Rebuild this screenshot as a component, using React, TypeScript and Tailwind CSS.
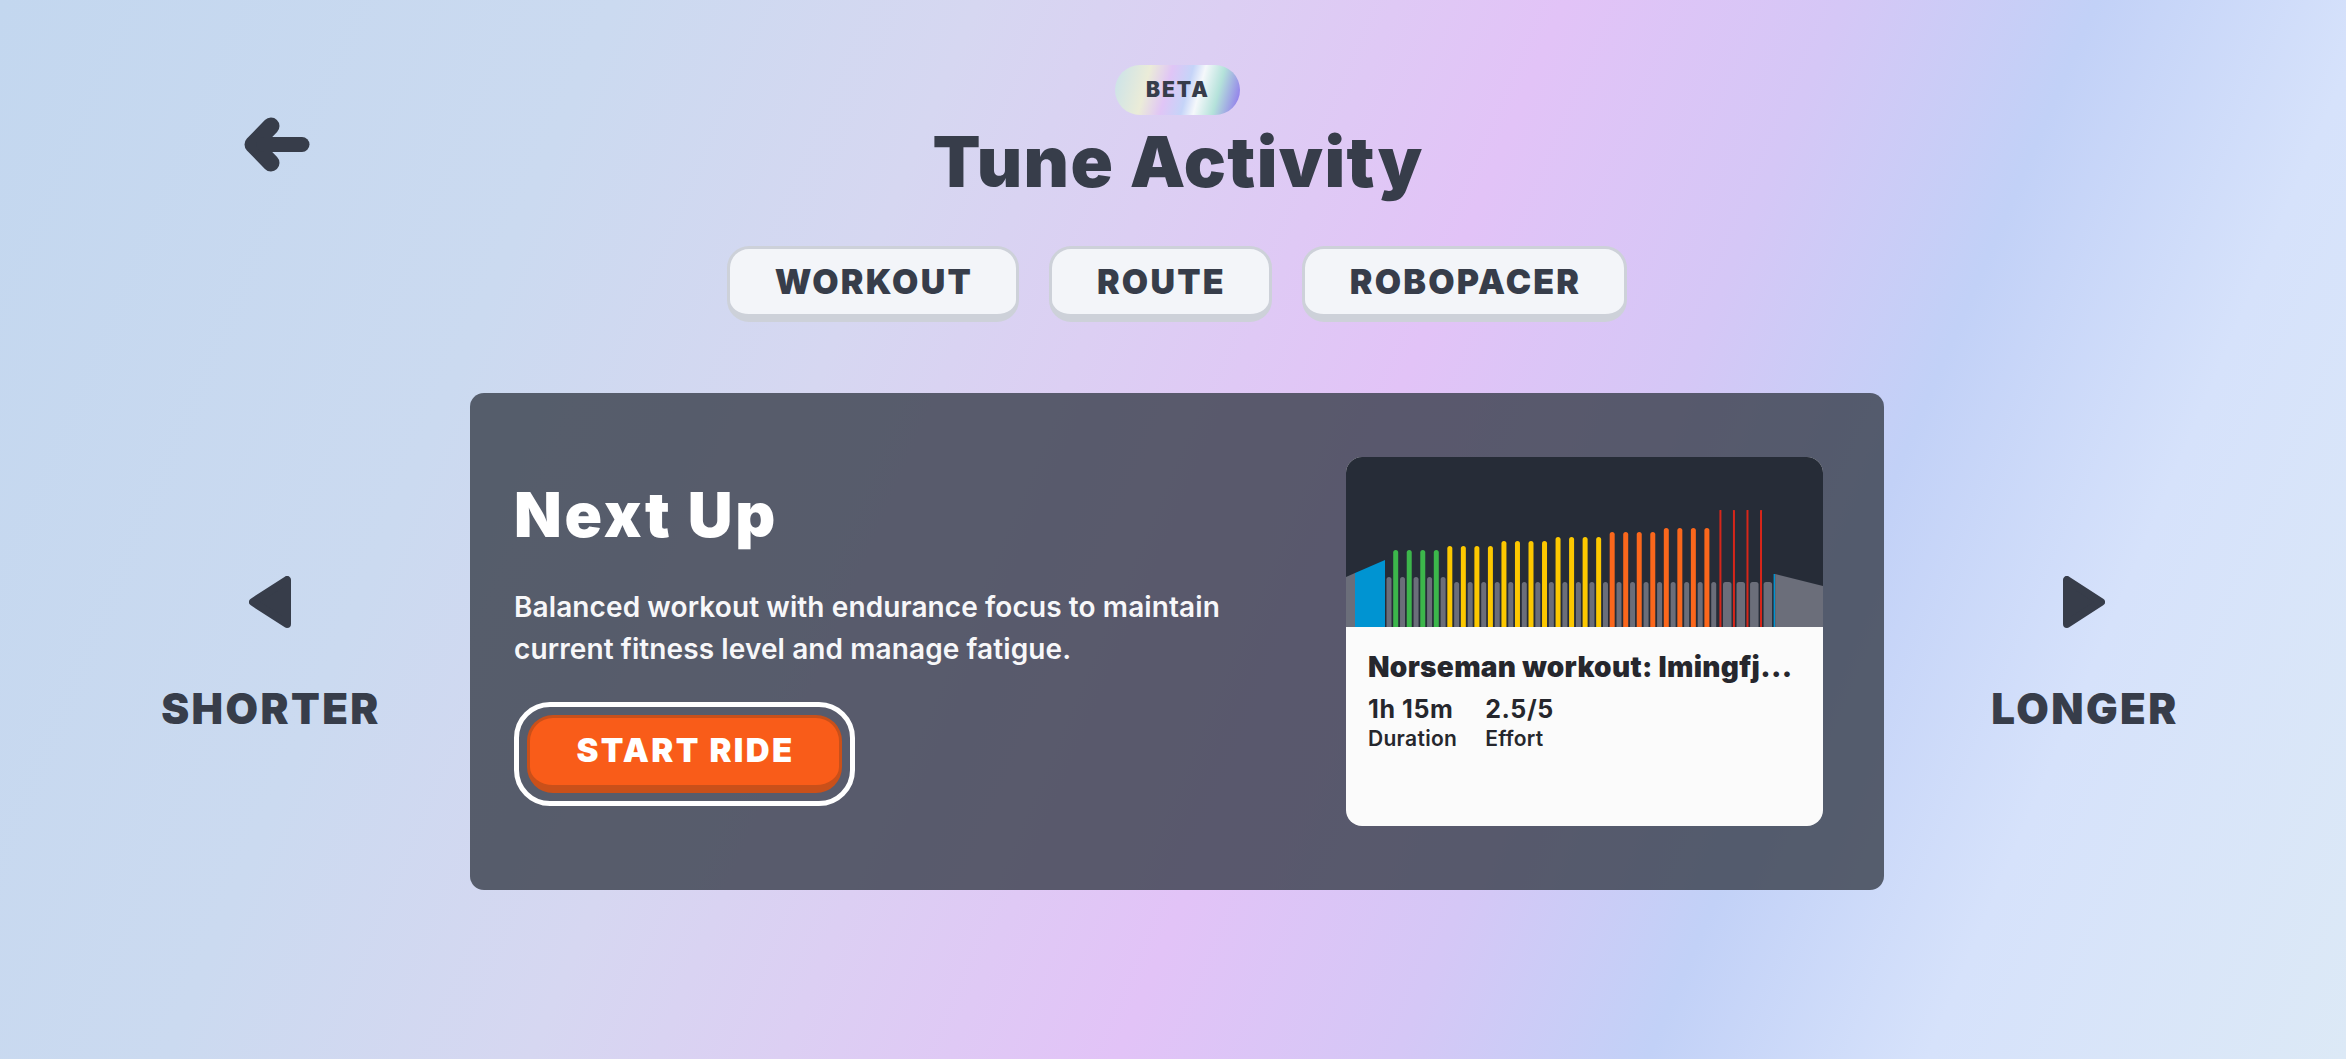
const INK = "#373d4a";

// interval blocks of the workout profile, left to right
const tiers = [
  { color: "#3cb64b", top: 93, n: 4 },
  { color: "#fcc800", top: 89, n: 4 },
  { color: "#fcc800", top: 84, n: 4 },
  { color: "#fcc800", top: 80, n: 4 },
  { color: "#fb671c", top: 75, n: 4 },
  { color: "#fb671c", top: 71, n: 4 },
  { color: "#d6261a", top: 53, n: 4 },
];

const STEP = 13.53;

function BackArrow() {
  return (
    <svg width="66" height="55" viewBox="0 0 66 55" fill="none">
      <path
        d="M27 9 L9 27.5 L27 46"
        stroke={INK}
        strokeWidth="17"
        strokeLinecap="round"
        strokeLinejoin="round"
      />
      <path d="M20 27.5 H58" stroke={INK} strokeWidth="15" strokeLinecap="round" />
    </svg>
  );
}

function Triangle({ dir }: { dir: "left" | "right" }) {
  const pts = dir === "left" ? "4,26 38,4 38,48" : "38,26 4,4 4,48";
  return (
    <svg width="42" height="52" viewBox="0 0 42 52">
      <polygon points={pts} fill={INK} stroke={INK} strokeWidth="8" strokeLinejoin="round" />
    </svg>
  );
}

function Profile() {
  const colored = tiers.flatMap((t) => Array.from({ length: t.n }, () => t));
  const grays = Array.from({ length: 29 }, (_, i) => ({
    cx: 43 + STEP * i,
    top: i <= 4 ? 120 : 125,
    w: i >= 25 ? 8.5 : 5,
  }));

  return (
    <svg viewBox="0 0 477 170" className="block h-[170px] w-[477px]">
      <rect width="477" height="170" fill="#262c37" />
      <polygon points="0,120 9,116 9,170 0,170" fill="#6b6e7a" />
      <polygon points="9,116 39,103 39,170 9,170" fill="#0094d2" />
      {grays.map((g, i) => (
        <rect
          key={"g" + i}
          x={g.cx - g.w / 2}
          y={g.top}
          width={g.w}
          height={170 - g.top + 4}
          rx="2.5"
          fill="#6b6e7a"
        />
      ))}
      {colored.map((c, i) => {
        const thin = i >= 24;
        const w = thin ? 2 : 5;
        const cx = 49.7 + STEP * i;
        return (
          <rect
            key={"c" + i}
            x={cx - w / 2}
            y={c.top}
            width={w}
            height={170 - c.top + 4}
            rx={thin ? 0.5 : 2.5}
            fill={c.color}
          />
        );
      })}
      <rect x="427.6" y="117" width="1.6" height="53" fill="#0094d2" />
      <polygon points="429.2,117 477,129 477,170 429.2,170" fill="#6b6e7a" />
    </svg>
  );
}

function Tab({ label }: { label: string }) {
  return (
    <button className="flex h-[76px] items-center rounded-[22px] border-[3px] border-b-[8px] border-[#cdd1d9] bg-[#f3f5f9] pl-[45px] pr-[43px] text-[34px] font-black uppercase tracking-[2.2px] text-[#373d4a]">
      {label}
    </button>
  );
}

function WorkoutCard() {
  return (
    <div className="h-[369px] w-[477px] overflow-hidden rounded-[16px] bg-[#fbfbfb]">
      <Profile />
      <div className="pl-[22px] pr-[20px] pt-[23px] text-[#26272d]">
        <div className="whitespace-nowrap text-[28px] font-black leading-[34px] tracking-[0.3px]">
          Norseman workout: Imingfj...
        </div>
        <div className="mt-[10px] flex gap-[28px]">
          <div>
            <div className="text-[25px] font-bold leading-[30px] tracking-[0.6px]">1h 15m</div>
            <div className="mt-[2px] text-[21px] font-semibold leading-[26px] tracking-[0.3px]">
              Duration
            </div>
          </div>
          <div>
            <div className="text-[25px] font-bold leading-[30px] tracking-[0.6px]">2.5/5</div>
            <div className="mt-[2px] text-[21px] font-semibold leading-[26px] tracking-[0.3px]">
              Effort
            </div>
          </div>
        </div>
      </div>
    </div>
  );
}

export default function App() {
  return (
    <div className="min-h-screen w-full bg-[linear-gradient(113deg,#c3d7ef_0%,#cbdaf0_22%,#d6d7f1_35%,#dccff3_44%,#e2c3f7_56%,#d5c7f6_66%,#c2d1f7_75%,#d6e2fb_85%,#dce9f6_100%)] pl-2 pt-[65px] font-['Inter',sans-serif] text-[#373d4a]">
      {/* Header */}
      <div className="flex justify-center">
        <div className="flex w-[400px] justify-center pl-[14px] pt-[52px]">
          <button aria-label="Back" className="h-[55px]">
            <BackArrow />
          </button>
        </div>
        <div className="flex w-[1414px] flex-col items-center">
          <div className="flex h-[50px] w-[125px] items-center justify-center rounded-full bg-[linear-gradient(105deg,#c9e2ea_0%,#ebecd8_26%,#e0c5f6_42%,#c5d4f8_57%,#f5f8fb_66%,#b4e2da_80%,#8c6bef_100%)] pl-[2px] text-[21px] font-black tracking-[2px]">
            BETA
          </div>
          <h1 className="mt-[12px] pl-[2px] text-[70px] font-black leading-[70px] tracking-[1.4px]">
            Tune Activity
          </h1>
          <div className="mt-[49px] flex gap-[30px]">
            <Tab label="Workout" />
            <Tab label="Route" />
            <Tab label="Robopacer" />
          </div>
        </div>
        <div className="w-[400px]" />
      </div>

      {/* Main row */}
      <div className="mt-[71px] flex justify-center">
        <div className="flex w-[400px] flex-col items-center pt-[183px]">
          <button aria-label="Shorter">
            <Triangle dir="left" />
          </button>
          <span className="mt-[56px] pl-[2px] text-[42px] font-black leading-[50px] tracking-[2.4px]">
            SHORTER
          </span>
        </div>

        <div className="flex h-[497px] w-[1414px] items-center justify-between rounded-[14px] bg-[#373d4a]/80 pl-[44px] pr-[61px]">
          <div className="mt-[6px]">
            <h2 className="text-[62px] font-black leading-[62px] tracking-[2.8px] text-white">
              Next Up
            </h2>
            <p className="mt-[40px] max-w-[760px] text-[28px] font-semibold leading-[42px] tracking-[0.1px] text-[#f7f7f9]">
              Balanced workout with endurance focus to maintain current fitness level and
              manage fatigue.
            </p>
            <div className="mt-[32px] inline-flex rounded-[36px] border-[5px] border-white p-[8px]">
              <button className="flex h-[78px] w-[315px] items-center justify-center rounded-[26px] border-[3px] border-b-[8px] border-[#c9501a] bg-[#f95c19] pl-[2px] text-[33px] font-black tracking-[2.3px] text-white">
                START RIDE
              </button>
            </div>
          </div>
          <WorkoutCard />
        </div>

        <div className="flex w-[400px] flex-col items-center pt-[183px]">
          <button aria-label="Longer">
            <Triangle dir="right" />
          </button>
          <span className="mt-[56px] pl-[2px] text-[42px] font-black leading-[50px] tracking-[2.4px]">
            LONGER
          </span>
        </div>
      </div>
    </div>
  );
}
